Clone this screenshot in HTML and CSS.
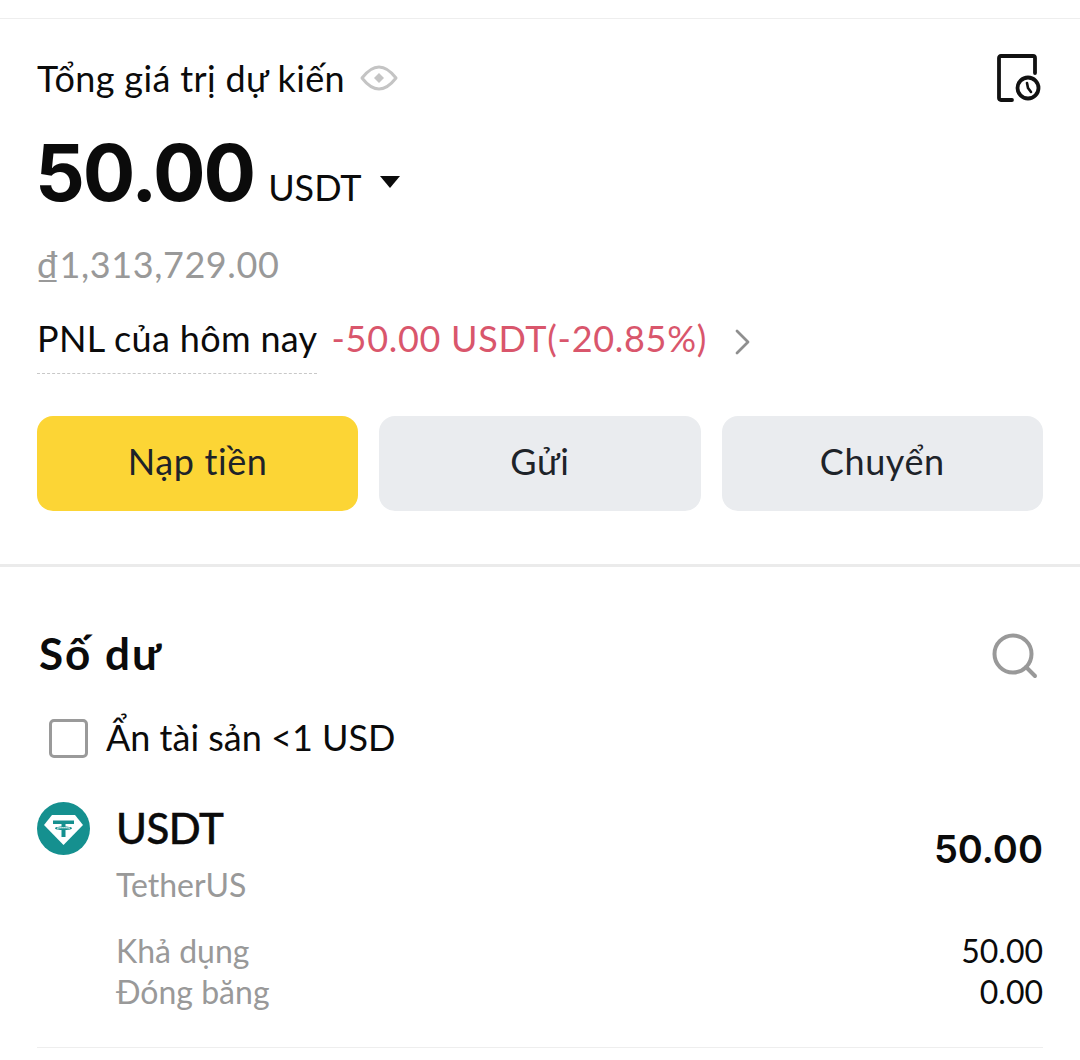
FILE: index.html
```html
<!DOCTYPE html>
<html>
  <head>
    <meta charset="utf-8">
    <title>Tổng giá trị dự kiến</title>
    <link rel="stylesheet" href="styles.css">
  </head>

  <body>
    <div class="overview">
      <div class="title-row">
        <div class="title">
          <span>Tổng giá trị dự kiến</span>
          <svg class="eye" width="38" height="28" viewBox="0 0 38 28">
            <path d="M2 14 C9 5 14 3 19 3 C24 3 29 5 36 14 C29 23 24 25 19 25 C14 25 9 23 2 14 Z" fill="none" stroke="#c4c4c4" stroke-width="3" stroke-linejoin="round"/>
            <path d="M19 9 L24 14 L19 19 L14 14 Z" fill="#c4c4c4"/>
          </svg>
        </div>
        <svg class="history" width="46" height="50" viewBox="0 0 46 50">
          <path d="M15 46 H4 Q2 46 2 44 V4 Q2 2 4 2 H36 Q38 2 38 4 V19" fill="none" stroke="#111" stroke-width="3.8" stroke-linecap="round"/>
          <circle cx="31" cy="34" r="10.5" fill="none" stroke="#111" stroke-width="3.8"/>
          <path d="M30 29 L31 34 L34 38" fill="none" stroke="#111" stroke-width="2.6" stroke-linecap="round"/>
        </svg>
      </div>
      <div class="total">
        <span class="total-num">50.00</span>
        <span class="total-unit">USDT</span>
        <span class="caret"></span>
      </div>
      <div class="fiat">₫1,313,729.00</div>
      <div class="pnl">
        <span class="pnl-label">PNL của hôm nay</span>
        <span class="pnl-value">-50.00 USDT(-20.85%)</span>
        <svg width="18" height="28" viewBox="0 0 18 28">
          <path d="M3 3 L14 14 L3 25" fill="none" stroke="#8f8f8f" stroke-width="2.8" stroke-linecap="round" stroke-linejoin="round"/>
        </svg>
      </div>
      <div class="actions">
        <div class="btn btn-main">Nạp tiền</div>
        <div class="btn">Gửi</div>
        <div class="btn">Chuyển</div>
      </div>
    </div>

    <div class="balance">
      <div class="balance-head">
        <div class="balance-title">Số dư</div>
        <svg class="search" width="48" height="48" viewBox="0 0 48 48">
          <circle cx="22" cy="21" r="18.5" fill="none" stroke="#999" stroke-width="4"/>
          <path d="M35 34 L44 43" fill="none" stroke="#999" stroke-width="4" stroke-linecap="round"/>
        </svg>
      </div>
      <div class="hide-small">
        <span class="check"></span>
        <span>Ẩn tài sản &lt;1 USD</span>
      </div>
      <div class="coin">
        <svg class="coin-logo" width="53" height="53" viewBox="0 0 53 53">
          <circle cx="26.5" cy="26.5" r="26.5" fill="#15908f"/>
          <path d="M15 13 H38 L46 23 L26.5 43 L7 23 Z" fill="#fff"/>
          <path d="M16 18.5 H37 V22 H28.5 V24.5 C32 24.7 35 25.3 35 26.3 C35 27.3 32 27.9 28.5 28.1 V35 H24.5 V28.1 C21 27.9 18 27.3 18 26.3 C18 25.3 21 24.7 24.5 24.5 V22 H16 Z" fill="#15908f"/>
          <path d="M20 26.2 C22 25.6 31 25.6 33 26.2" fill="none" stroke="#fff" stroke-width="1"/>
        </svg>
        <div class="coin-main">
          <div class="coin-head">
            <div>
              <div class="coin-name">USDT</div>
              <div class="coin-full">TetherUS</div>
            </div>
            <div class="coin-total">50.00</div>
          </div>
          <div class="coin-row">
            <span class="muted">Khả dụng</span>
            <span>50.00</span>
          </div>
          <div class="coin-row">
            <span class="muted">Đóng băng</span>
            <span>0.00</span>
          </div>
        </div>
      </div>
    </div>
  </body>
</html>
```

FILE: styles.css
```css
*, *:before, *:after {
  box-sizing: border-box;
}
html, body {
  padding: 0;
  margin: 0;
}
body {
  width: 1080px;
  height: 1060px;
  overflow: hidden;
  padding-top: 18px;
  background: #fff;
  color: #0b0b0b;
  font-family: "Lato", "Open Sans", sans-serif;
}
svg {
  display: block;
  flex: none;
}
.overview {
  height: 549px;
  padding: 34px 37px 0;
  border-top: 1px solid #eeeeee;
  border-bottom: 3px solid #ebebeb;
}
.title-row {
  display: flex;
  justify-content: space-between;
  align-items: flex-start;
  height: 50px;
}
.title {
  display: flex;
  align-items: center;
  gap: 15px;
  font-size: 36px;
  line-height: 50px;
  letter-spacing: 0.35px;
}
.history {
  margin-top: 1px;
}
.total {
  display: flex;
  align-items: baseline;
  margin-top: 25px;
  line-height: 90px;
}
.total-num {
  margin-left: -2px;
  font-family: "Inter", sans-serif;
  font-size: 78px;
  font-weight: 700;
  letter-spacing: -2px;
}
.total-unit {
  margin-left: 14px;
  font-size: 36px;
}
.caret {
  margin-left: 18px;
  align-self: center;
  margin-top: 4px;
  border-left: 10px solid transparent;
  border-right: 10px solid transparent;
  border-top: 12px solid #0b0b0b;
}
.fiat {
  margin-top: 7px;
  font-size: 36px;
  line-height: 50px;
  letter-spacing: 0.6px;
  color: #999;
}
.pnl {
  display: flex;
  align-items: flex-start;
  margin-top: 24px;
  font-size: 36px;
  line-height: 50px;
}
.pnl-label {
  padding-bottom: 10px;
  border-bottom: 1px dashed #c8c8c8;
  letter-spacing: 0.33px;
}
.pnl-value {
  margin-left: 14px;
  letter-spacing: 0.7px;
  color: #d9566c;
}
.pnl svg {
  margin: 15px 0 0 27px;
}
.actions {
  display: grid;
  grid-template-columns: repeat(3, 1fr);
  gap: 21px;
  margin-top: 42px;
}
.btn {
  height: 95px;
  line-height: 91px;
  border-radius: 16px;
  background: #eaecef;
  color: #1e2329;
  font-size: 36px;
  letter-spacing: 0.6px;
  text-align: center;
}
.btn-main {
  background: #fcd535;
}
.balance {
  padding: 0 37px;
}
.balance-head {
  display: flex;
  justify-content: space-between;
  align-items: flex-start;
  margin-top: 62px;
  padding-left: 2px;
  height: 48px;
}
.balance-title {
  font-size: 44px;
  line-height: 48px;
  font-weight: 700;
  letter-spacing: 2px;
}
.search {
  margin: 4px 4px 0 0;
}
.hide-small {
  display: flex;
  align-items: center;
  gap: 18px;
  margin-top: 35px;
  padding-left: 12px;
  font-size: 36px;
  line-height: 50px;
}
.check {
  width: 39px;
  height: 39px;
  margin-top: 2px;
  border: 3px solid #9a9a9a;
  border-radius: 5px;
}
.coin {
  display: flex;
  align-items: flex-start;
  gap: 26px;
  margin-top: 40px;
  padding-bottom: 35px;
  border-bottom: 1px solid #eeeeee;
}
.coin-main {
  flex: 1;
  margin-top: -2px;
}
.coin-head {
  display: flex;
  justify-content: space-between;
  align-items: center;
}
.coin-name {
  font-size: 42px;
  line-height: 56px;
  font-weight: 500;
  letter-spacing: -0.5px;
  -webkit-text-stroke: 0.4px #0b0b0b;
}
.coin-full {
  margin-top: 7px;
  font-size: 32px;
  line-height: 44px;
  color: #999;
}
.coin-total {
  margin-bottom: 10px;
  font-family: "Inter", sans-serif;
  font-size: 38px;
  font-weight: 600;
}
.coin-row {
  display: flex;
  justify-content: space-between;
  font-size: 32px;
  line-height: 41px;
}
.coin-head + .coin-row {
  margin-top: 23px;
}
.muted {
  color: #999;
}
```
